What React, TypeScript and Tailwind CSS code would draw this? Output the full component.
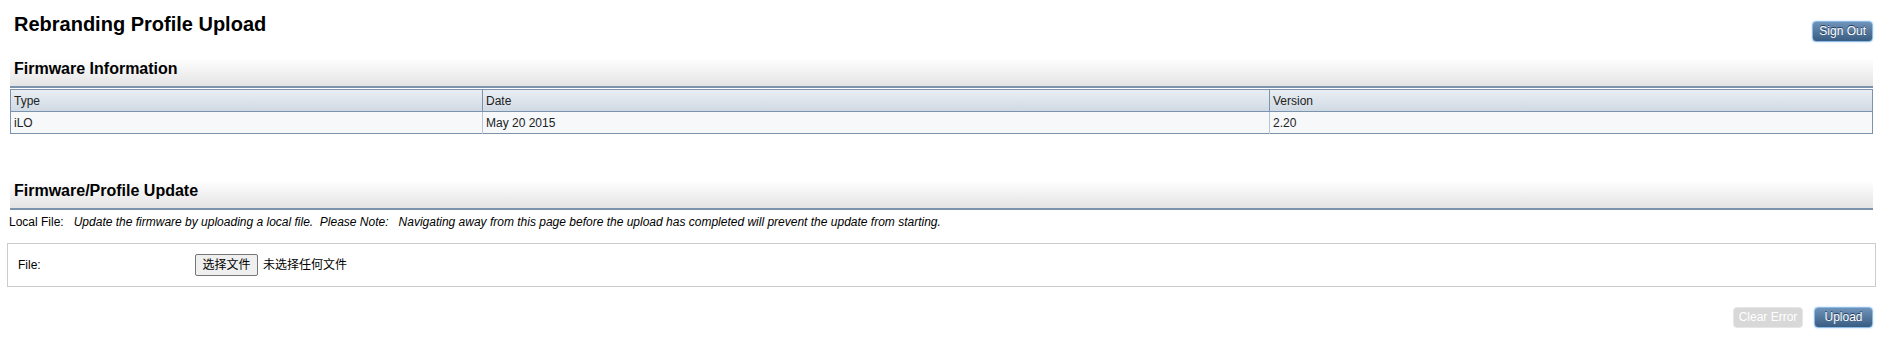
import React from 'react'

const font = { fontFamily: '"Liberation Sans", Arial, "Noto Sans CJK SC", sans-serif' }

function BlueButton({ label, className = '' }: { label: string; className?: string }) {
  return (
    <button
      className={`h-[21px] min-w-[59px] rounded-[4px] border border-[#8dbbe8] bg-linear-to-b from-[#6f93b9] to-[#395c82] px-[6px] text-[12px] leading-[19px] text-white shadow-[0_0_2px_#a9d0f5] [text-shadow:0_-1px_0_#1f3a57] ${className}`}
    >
      {label}
    </button>
  )
}

function SectionHead({ title }: { title: string }) {
  return (
    <div className="mx-[3px] h-[30px] border-b-2 border-[#7b93ad] bg-linear-to-b from-white to-[#e4e4e4]">
      <h2 className="pl-[4px] pt-[2px] text-[16px] leading-[18px] font-bold text-black">{title}</h2>
    </div>
  )
}

export default function App() {
  const rows = [{ type: 'iLO', date: 'May 20 2015', version: '2.20' }]

  return (
    <main style={font} className="min-h-screen bg-white pl-[7px] pr-[17px] text-black">
      <header className="flex h-[58px] items-start justify-between">
        <h1 className="pl-[7px] pt-[12px] text-[20px] leading-[24px] font-bold">Rebranding Profile Upload</h1>
        <BlueButton label="Sign Out" className="mr-[3px] mt-[21px] h-[20px] leading-[18px]" />
      </header>

      <SectionHead title="Firmware Information" />

      <div className="mx-[3px] mt-[1px]">
        <table className="w-full table-fixed border-collapse border border-[#7b93ad] text-[12px] text-[#222]">
          <thead>
            <tr className="h-[22px] bg-linear-to-b from-[#e9eef3] to-[#cfd9e3]">
              <th className="w-[472px] border-r border-b border-[#7b93ad] pl-[3px] text-left font-normal">Type</th>
              <th className="w-[787px] border-r border-b border-[#7b93ad] pl-[3px] text-left font-normal">Date</th>
              <th className="border-b border-[#7b93ad] pl-[3px] text-left font-normal">Version</th>
            </tr>
          </thead>
          <tbody>
            {rows.map((r) => (
              <tr key={r.type} className="h-[22px] bg-[#f6f8fa]">
                <td className="border-r border-[#b7c5d5] pl-[3px]">{r.type}</td>
                <td className="border-r border-[#b7c5d5] pl-[3px]">{r.date}</td>
                <td className="pl-[3px]">{r.version}</td>
              </tr>
            ))}
          </tbody>
        </table>
      </div>

      <div className="mt-[46px]">
        <SectionHead title="Firmware/Profile Update" />
      </div>

      <p className="mt-[4px] whitespace-pre pl-[2px] text-[12px] leading-[16px]">
        {'Local File:   '}
        <i>{'Update the firmware by uploading a local file.  Please Note:   Navigating away from this page before the upload has completed will prevent the update from starting.'}</i>
      </p>

      <div className="mt-[13px] flex h-[44px] items-center border border-[#cccccc] pl-[10px]">
        <span className="w-[177px] text-[12px]">File:</span>
        <button className="h-[22px] w-[63px] rounded-[2px] border border-[#767676] bg-[#efefef] text-[12px] leading-[20px]">选择文件</button>
        <span className="ml-[5px] text-[12px]">未选择任何文件</span>
      </div>

      <div className="mr-[3px] mt-[20px] flex justify-end gap-[11px]">
        <button
          disabled
          className="h-[21px] w-[70px] rounded-[4px] border border-[#e6e6e6] bg-[#d8d8d8] text-[12px] leading-[19px] text-white"
        >
          Clear Error
        </button>
        <BlueButton label="Upload" />
      </div>
    </main>
  )
}
